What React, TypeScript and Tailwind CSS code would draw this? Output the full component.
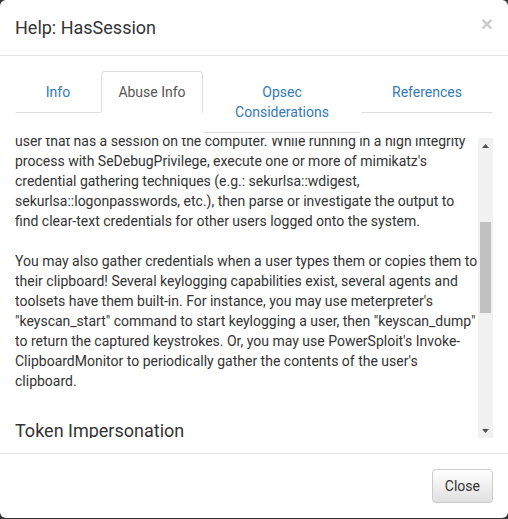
import { useLayoutEffect, useRef } from "react";

const tabs = [
  { label: "Info", width: "w-[86px]" },
  { label: "Abuse Info", width: "w-[102px]", active: true },
  { label: "Opsec Considerations", width: "w-[158px]", twoLines: true },
  { label: "References", width: "w-[132px]" },
];

function Scrollbar() {
  return (
    <div className="w-[15px] shrink-0 bg-[#f1f1f1] flex flex-col">
      <div className="h-[15px] flex items-center justify-center">
        <svg width="7" height="4" viewBox="0 0 7 4">
          <path d="M3.5 0 L7 4 L0 4 Z" fill="#505050" />
        </svg>
      </div>
      <div className="flex-1">
        <div className="mt-[69px] h-[91px] mx-[2px] bg-[#c1c1c1]" />
      </div>
      <div className="h-[15px] flex items-center justify-center">
        <svg width="7" height="4" viewBox="0 0 7 4">
          <path d="M0 0 L7 0 L3.5 4 Z" fill="#505050" />
        </svg>
      </div>
    </div>
  );
}

export default function App() {
  const scrollRef = useRef<HTMLDivElement>(null);
  const markRef = useRef<HTMLSpanElement>(null);

  useLayoutEffect(() => {
    if (scrollRef.current && markRef.current) {
      scrollRef.current.scrollTop = markRef.current.offsetTop + 5;
    }
  }, []);

  return (
    <div className="h-screen bg-[#333] font-['Roboto',sans-serif] text-[14px] text-[#333]">
      <div className="h-[518px] bg-white rounded-[6px] flex flex-col">
        <div className="flex items-start justify-between p-[15px] border-b border-[#e5e5e5]">
          <h4 className="text-[18px] leading-[25px]">Help: HasSession</h4>
          <button className="font-['Liberation_Sans',sans-serif] font-bold text-[21px] leading-none text-[#ccc] -mt-[2px]">
            ×
          </button>
        </div>

        <div className="flex-1 p-[15px]">
          <ul className="flex items-start">
            {tabs.map((t) =>
              t.active ? (
                <li
                  key={t.label}
                  className={`${t.width} text-center py-[10px] leading-[20px] border border-[#ddd] border-b-white rounded-t-[4px] text-[#555]`}
                >
                  {t.label}
                </li>
              ) : (
                <li
                  key={t.label}
                  className={`${t.width} text-center py-[10px] leading-[20px] border border-transparent border-b-[#ddd] text-[#337ab7]`}
                >
                  {t.twoLines ? (
                    <>
                      Opsec
                      <br />
                      Considerations
                    </>
                  ) : (
                    t.label
                  )}
                </li>
              )
            )}
          </ul>

          <div className="mt-[5px] h-[300px] flex">
            <div ref={scrollRef} className="relative flex-1 overflow-hidden leading-[20px]">
              <h4 className="text-[18px] leading-[19.8px] mt-[10px] mb-[10px]">Password Theft</h4>
              <p>
                When a user has a session on the computer, you may be able to obtain credentials
                for the user via credential dumping or token impersonation. You must be able to
                move laterally to the computer, have administrative access on the computer, and
                the user must have a non-network logon session on the computer.
                <br />
                <br />
                Once you have established a Cobalt Strike Beacon, Empire agent, or other implant
                on the target, you can use mimikatz to dump credentials of the
                <br />
                <span ref={markRef}>user</span> that has a session on the computer. While running
                in a high integrity process with SeDebugPrivilege, execute one or more of
                mimikatz's credential gathering techniques (e.g.: sekurlsa::wdigest,
                sekurlsa::logonpasswords, etc.), then parse or investigate the output to find
                clear-text credentials for other users logged onto the system.
                <br />
                <br />
                You may also gather credentials when a user types them or copies them to their
                clipboard! Several keylogging capabilities exist, several agents and toolsets have
                them built-in. For instance, you may use meterpreter's "keyscan_start" command to
                start keylogging a user, then "keyscan_dump" to return the captured keystrokes.
                Or, you may use PowerSploit's Invoke-ClipboardMonitor to periodically gather the
                contents of the user's clipboard.
              </p>
              <h4 className="text-[18px] leading-[19.8px] mt-[30px] mb-[10px]">
                Token Impersonation
              </h4>
              <p>
                You may run into a situation where a user is logged onto the system, but you can't
                gather that user's credential. This may be caused by a host-based security
                product, lsass protection, etc. In those circumstances, you may abuse Windows'
                token model in several ways. First, you may inject your agent into that user's
                process, which will give you a process token as that user, which you can then use
                to authenticate to other systems on the network. Or, you may steal a process token
                from a remote process and start a thread in your agent's process with that user's
                token. For more information about token abuses, see the References tab.
                <br />
                <br />
                User sessions can be short lived and only represent the sessions that were present
                at the time of collection. A user may have ended their session by the time you
                move to the computer to target them.
              </p>
            </div>
            <Scrollbar />
          </div>
        </div>

        <div className="flex justify-end px-[15px] pt-[15px] pb-[15px] border-t border-[#e5e5e5]">
          <button className="px-[12px] py-[6px] leading-[20px] rounded-[4px] border border-[#ccc] bg-gradient-to-b from-white to-[#e0e0e0] text-[#333]">
            Close
          </button>
        </div>
      </div>
    </div>
  );
}
